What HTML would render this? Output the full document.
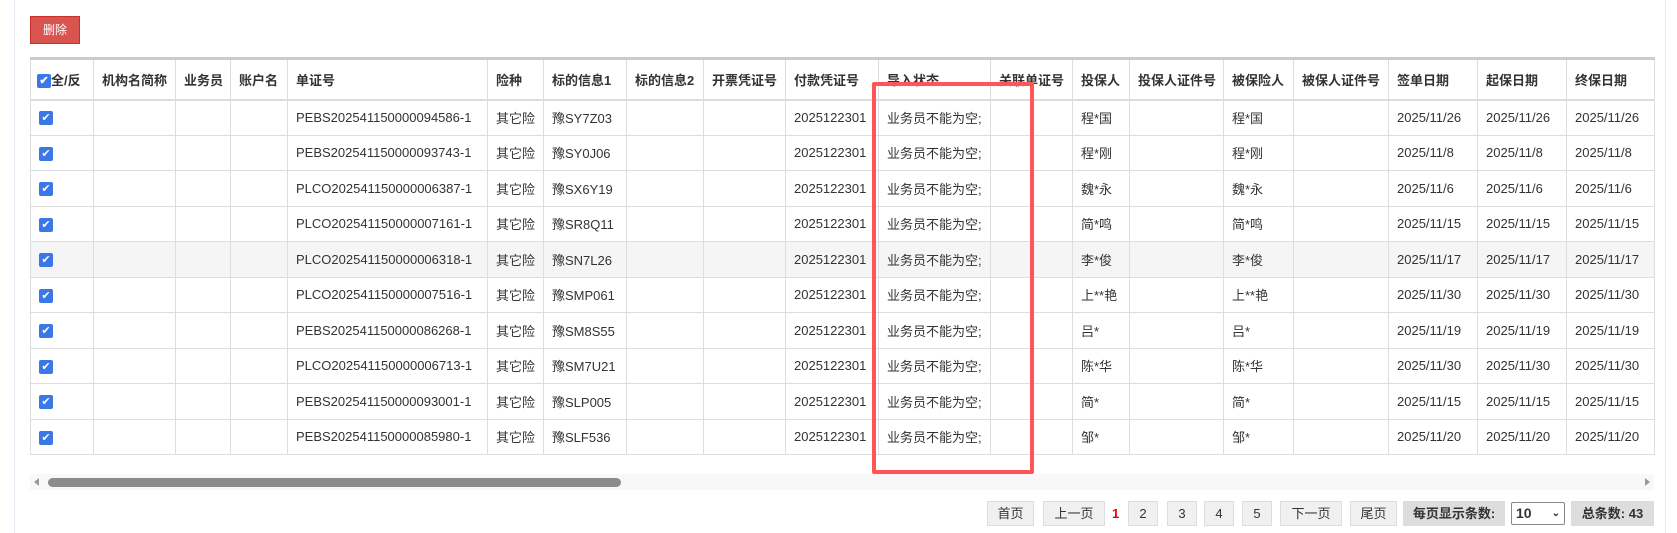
<!DOCTYPE html>
<html><head><meta charset="utf-8"><style>
*{box-sizing:border-box;margin:0;padding:0}
body{width:1677px;height:533px;background:#fff;position:relative;overflow:hidden;font-family:"Liberation Sans","Noto Sans CJK SC",sans-serif;color:#333;font-size:13px}
.vl{position:absolute;left:14px;top:0;width:1px;height:533px;background:#e6ecf3}
.vr{position:absolute;left:1665px;top:0;width:1px;height:533px;background:#e6ecf3}
.del{position:absolute;left:30px;top:16px;width:50px;height:28px;background:#d9534f;border:1px solid #c9302c;color:#fff;font-size:12px;line-height:26px;text-align:center}
table{position:absolute;left:30px;top:57px;border-collapse:collapse;table-layout:fixed;width:1624px}
td,th{border:1px solid #ddd;padding:0 0 0 8px;white-space:nowrap;overflow:hidden;text-align:left}
th{height:41px;font-weight:bold;border-top:3px solid #ccc;border-bottom:2px solid #ddd}
td{height:35.5px}
tr.h td{background:#f5f5f5}
.cb{display:inline-block;width:14px;height:14px;background:#3b78e7;border-radius:2px;color:#fff;font-size:11px;line-height:14px;text-align:center;vertical-align:middle}
.track{position:absolute;left:30px;top:474px;width:1624px;height:16px;background:#f8f8f8}
.thumb{position:absolute;left:48px;top:478px;width:573px;height:9px;background:#8c8c8c;border-radius:5px}
.al{position:absolute;left:34px;top:478px;width:0;height:0;border-top:4px solid transparent;border-bottom:4px solid transparent;border-right:5px solid #999}
.ar{position:absolute;left:1645px;top:478px;width:0;height:0;border-top:4px solid transparent;border-bottom:4px solid transparent;border-left:5px solid #999}
.rb{position:absolute;left:872px;top:82px;width:162px;height:392px;border:4px solid #f55;border-radius:2px}
.pg{position:absolute;top:501px;height:25px;background:#f0f0f0;border:1px solid #ddd;font-size:13px;line-height:23px;text-align:center}
.lab{position:absolute;top:501px;height:25px;background:#ddd;font-weight:bold;font-size:13px;line-height:25px;text-align:center}
</style></head><body>
<div class="vl"></div><div class="vr"></div>
<div class="del">删除</div>
<table>
<colgroup>
<col style="width:63px"><col style="width:82px"><col style="width:55px"><col style="width:57px"><col style="width:200px"><col style="width:56px"><col style="width:83px"><col style="width:77px"><col style="width:82px"><col style="width:93px"><col style="width:112px"><col style="width:82px"><col style="width:57px"><col style="width:94px"><col style="width:70px"><col style="width:95px"><col style="width:89px"><col style="width:89px"><col style="width:88px">
</colgroup>
<tr><th style="padding-left:6px"><span class="cb">✔</span>全/反</th><th>机构名简称</th><th>业务员</th><th>账户名</th><th>单证号</th><th>险种</th><th>标的信息1</th><th>标的信息2</th><th>开票凭证号</th><th>付款凭证号</th><th>导入状态</th><th>关联单证号</th><th>投保人</th><th>投保人证件号</th><th>被保险人</th><th>被保人证件号</th><th>签单日期</th><th>起保日期</th><th>终保日期</th></tr>
<tr><td><span class="cb">✔</span></td><td></td><td></td><td></td><td>PEBS202541150000094586-1</td><td>其它险</td><td>豫SY7Z03</td><td></td><td></td><td>2025122301</td><td>业务员不能为空;</td><td></td><td>程*国</td><td></td><td>程*国</td><td></td><td>2025/11/26</td><td>2025/11/26</td><td>2025/11/26</td></tr>
<tr><td><span class="cb">✔</span></td><td></td><td></td><td></td><td>PEBS202541150000093743-1</td><td>其它险</td><td>豫SY0J06</td><td></td><td></td><td>2025122301</td><td>业务员不能为空;</td><td></td><td>程*刚</td><td></td><td>程*刚</td><td></td><td>2025/11/8</td><td>2025/11/8</td><td>2025/11/8</td></tr>
<tr><td><span class="cb">✔</span></td><td></td><td></td><td></td><td>PLCO202541150000006387-1</td><td>其它险</td><td>豫SX6Y19</td><td></td><td></td><td>2025122301</td><td>业务员不能为空;</td><td></td><td>魏*永</td><td></td><td>魏*永</td><td></td><td>2025/11/6</td><td>2025/11/6</td><td>2025/11/6</td></tr>
<tr><td><span class="cb">✔</span></td><td></td><td></td><td></td><td>PLCO202541150000007161-1</td><td>其它险</td><td>豫SR8Q11</td><td></td><td></td><td>2025122301</td><td>业务员不能为空;</td><td></td><td>简*鸣</td><td></td><td>简*鸣</td><td></td><td>2025/11/15</td><td>2025/11/15</td><td>2025/11/15</td></tr>
<tr class="h"><td><span class="cb">✔</span></td><td></td><td></td><td></td><td>PLCO202541150000006318-1</td><td>其它险</td><td>豫SN7L26</td><td></td><td></td><td>2025122301</td><td>业务员不能为空;</td><td></td><td>李*俊</td><td></td><td>李*俊</td><td></td><td>2025/11/17</td><td>2025/11/17</td><td>2025/11/17</td></tr>
<tr><td><span class="cb">✔</span></td><td></td><td></td><td></td><td>PLCO202541150000007516-1</td><td>其它险</td><td>豫SMP061</td><td></td><td></td><td>2025122301</td><td>业务员不能为空;</td><td></td><td>上**艳</td><td></td><td>上**艳</td><td></td><td>2025/11/30</td><td>2025/11/30</td><td>2025/11/30</td></tr>
<tr><td><span class="cb">✔</span></td><td></td><td></td><td></td><td>PEBS202541150000086268-1</td><td>其它险</td><td>豫SM8S55</td><td></td><td></td><td>2025122301</td><td>业务员不能为空;</td><td></td><td>吕*</td><td></td><td>吕*</td><td></td><td>2025/11/19</td><td>2025/11/19</td><td>2025/11/19</td></tr>
<tr><td><span class="cb">✔</span></td><td></td><td></td><td></td><td>PLCO202541150000006713-1</td><td>其它险</td><td>豫SM7U21</td><td></td><td></td><td>2025122301</td><td>业务员不能为空;</td><td></td><td>陈*华</td><td></td><td>陈*华</td><td></td><td>2025/11/30</td><td>2025/11/30</td><td>2025/11/30</td></tr>
<tr><td><span class="cb">✔</span></td><td></td><td></td><td></td><td>PEBS202541150000093001-1</td><td>其它险</td><td>豫SLP005</td><td></td><td></td><td>2025122301</td><td>业务员不能为空;</td><td></td><td>简*</td><td></td><td>简*</td><td></td><td>2025/11/15</td><td>2025/11/15</td><td>2025/11/15</td></tr>
<tr><td><span class="cb">✔</span></td><td></td><td></td><td></td><td>PEBS202541150000085980-1</td><td>其它险</td><td>豫SLF536</td><td></td><td></td><td>2025122301</td><td>业务员不能为空;</td><td></td><td>邹*</td><td></td><td>邹*</td><td></td><td>2025/11/20</td><td>2025/11/20</td><td>2025/11/20</td></tr>
</table>
<div class="rb"></div>
<div class="track"></div><div class="thumb"></div><div class="al"></div><div class="ar"></div>
<div class="pg" style="left:987px;width:47px">首页</div>
<div class="pg" style="left:1043px;width:62px">上一页</div>
<div style="position:absolute;left:1112px;top:501px;line-height:25px;color:#e00;font-weight:bold;font-size:13px">1</div>
<div class="pg" style="left:1128px;width:30px">2</div>
<div class="pg" style="left:1167px;width:30px">3</div>
<div class="pg" style="left:1204px;width:30px">4</div>
<div class="pg" style="left:1242px;width:30px">5</div>
<div class="pg" style="left:1280px;width:62px">下一页</div>
<div class="pg" style="left:1350px;width:47px">尾页</div>
<div class="lab" style="left:1403px;width:102px">每页显示条数:</div>
<div style="position:absolute;left:1511px;top:502px;width:54px;height:23px;border:1px solid #888;border-radius:2px;font-weight:bold;font-size:14px;line-height:21px;padding-left:4px">10<span style="position:absolute;right:4px;font-size:10px">⌄</span></div>
<div class="lab" style="left:1571px;width:83px">总条数: 43</div>
</body></html>
